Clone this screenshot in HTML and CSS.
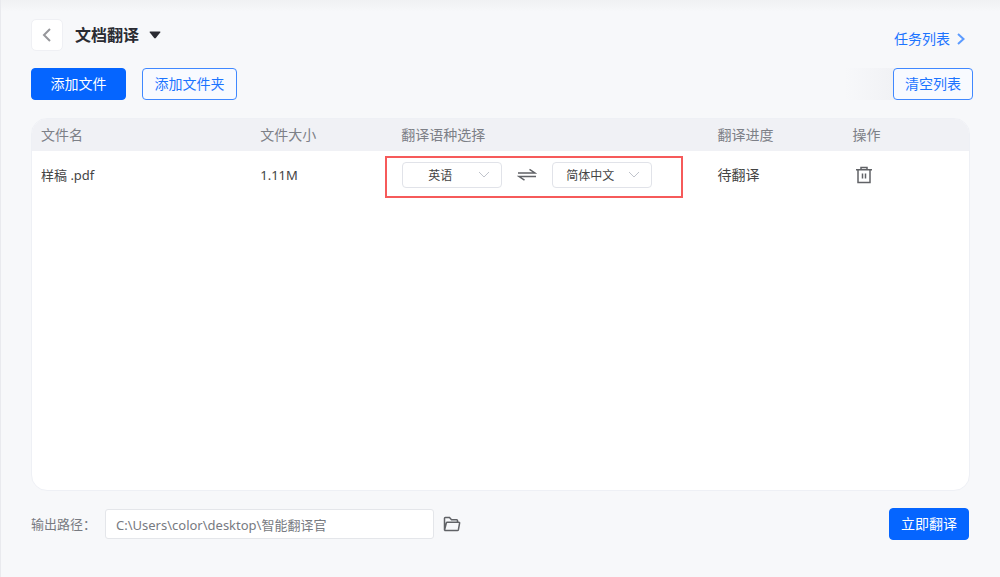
FILE: index.html
```html
<!DOCTYPE html>
<html lang="zh-CN">
<head>
<meta charset="utf-8">
<meta name="viewport" content="width=device-width, initial-scale=1">
<title>文档翻译</title>
<link rel="stylesheet" href="styles.css">
</head>
<body>
<main class="app">
  <header class="topbar">
    <button class="back" type="button" aria-label="返回">
      <svg width="10" height="16" viewBox="0 0 10 16"><path d="M8 2 2 8l6 6"/></svg>
    </button>
    <h1 class="title"><button class="title-menu" type="button">文档翻译
      <svg width="12" height="8" viewBox="0 0 12 8"><path d="M1.3.5h9.4q1.2 0 .5 1L6.8 7q-.8.9-1.6 0L.8 1.500Q.1.500 1.300.5z"/></svg>
    </button></h1>
    <a class="tasks" href="#tasks">任务列表
      <svg width="8" height="12" viewBox="0 0 8 12"><path d="m1 1 5.500 5L1 11"/></svg>
    </a>
  </header>

  <div class="toolbar">
    <button class="btn primary add" type="button">添加文件</button>
    <button class="btn outline add" type="button">添加文件夹</button>
    <div class="clear-group">
      <button class="btn outline" type="button">清空列表</button>
    </div>
  </div>

  <section class="panel">
    <table class="files">
      <colgroup><col class="c-name"><col class="c-size"><col class="c-lang"><col class="c-state"><col class="c-action"></colgroup>
      <thead>
        <tr><th>文件名</th><th>文件大小</th><th class="lang-head">翻译语种选择</th><th>翻译进度</th><th>操作</th></tr>
      </thead>
      <tbody>
        <tr>
          <td class="small">样稿 .pdf</td>
          <td class="small">1.11M</td>
          <td class="lang-cell">
            <div class="langs">
              <span class="picker">
                <select aria-label="源语言"><option>英语</option><option>简体中文</option></select>
                <svg width="12" height="8" viewBox="0 0 12 8"><path d="m1 1 5 5 5-5"/></svg>
              </span>
              <button class="icon swap" type="button" aria-label="交换语言">
                <svg width="20" height="14" viewBox="0 0 20 14"><path d="M1 5h17L12.500 1.300M19 8.500H2l5.500 3.700"/></svg>
              </button>
              <span class="picker">
                <select aria-label="目标语言"><option>简体中文</option><option>英语</option></select>
                <svg width="12" height="8" viewBox="0 0 12 8"><path d="m1 1 5 5 5-5"/></svg>
              </span>
            </div>
          </td>
          <td>待翻译</td>
          <td class="action-cell">
            <button class="icon trash" type="button" aria-label="删除">
              <svg width="18" height="18" viewBox="0 0 18 18"><path d="M1 3.800h16M6 3.500V1.500h6v2M3 4v12.500h12V4M7.500 7.500v5M10.500 7.500v5"/></svg>
            </button>
          </td>
        </tr>
      </tbody>
    </table>
  </section>

  <footer class="bottom">
    <label for="path">输出路径：</label>
    <input id="path" type="text" value="C:\Users\color\desktop\智能翻译官">
    <button class="icon folder" type="button" aria-label="选择文件夹">
      <svg width="18" height="16" viewBox="0 0 18 16"><path d="M1.500 14V2.300q0-.8.800-.8h4.200l2 2.200h5.200q.8 0 .8.800v1.800M1.500 14.200 3.300 7q.2-.7 1-.7h11.500q1 0 .8.900l-1.200 6.500q-.2.800-1 .8H2q-.5 0-.5-.5z"/></svg>
    </button>
    <button class="btn primary start" type="button">立即翻译</button>
  </footer>
</main>
</body>
</html>
```
FILE: styles.css
```css
* {
  box-sizing: border-box;
}

body {
  margin: 0;
  background: #f7f8fa;
  color: #444;
  font: 14px/20px "Noto Sans", "Noto Sans CJK SC", sans-serif;
}

button,
input,
select {
  font: inherit;
  color: inherit;
}

button {
  padding: 0;
  border: 0;
  background: none;
  cursor: pointer;
}

svg {
  display: block;
  fill: none;
  stroke: currentColor;
}

.app {
  display: flex;
  flex-direction: column;
  min-height: 100vh;
  padding: 19px 30px 37px;
  border-left: 1px solid #e9eaee;
  background: linear-gradient(#f0f1f3, #f7f8fa 12px);
}

.topbar {
  display: flex;
  align-items: center;
  height: 32px;
}

.back {
  display: grid;
  place-items: center;
  width: 32px;
  height: 32px;
  border: 1px solid #eff0f4;
  border-radius: 5px;
  background: #fff;
  color: #96979b;
}

.back svg {
  stroke-width: 2;
}

.title {
  margin: 0 0 0 12px;
  font-size: 16px;
  line-height: 24px;
}

.title-menu {
  display: flex;
  align-items: center;
  gap: 10px;
  color: #2a2b32;
  font-weight: 700;
}

.title-menu svg {
  fill: currentColor;
  stroke: none;
}

.tasks {
  display: flex;
  align-items: center;
  gap: 7px;
  margin: 8px 5px 0 auto;
  color: #1c74ff;
  text-decoration: none;
}

.tasks svg {
  stroke: #5c9bff;
  stroke-width: 2;
}

.toolbar {
  display: flex;
  gap: 16px;
  margin: 17px -3px 18px 0;
}

.btn {
  height: 32px;
  padding: 0 11px;
  border: 1px solid #0565ff;
  border-radius: 4px;
}

.primary {
  background: #0565ff;
  color: #fff;
}

.outline {
  border-color: #4088ff;
  background: #f8faff;
  color: #1c74ff;
}

.add {
  width: 95px;
  padding: 0;
}

.clear-group {
  margin-left: auto;
  padding-left: 48px;
  background: linear-gradient(90deg, #f7f8fa, #f1f2f5 48px, #f7f8fa 52px);
}

.panel {
  flex: 1;
  overflow: hidden;
  border: 1px solid #eef0f5;
  border-radius: 16px;
  background: #fff;
}

.files {
  width: 100%;
  border-collapse: collapse;
  table-layout: fixed;
}

.c-name { width: 23.4%; }
.c-size { width: 14.3%; }
.c-lang { width: 34.5%; }
.c-state { width: 14.4%; }
.c-action { width: 13.4%; }

.files th {
  height: 32px;
  padding: 0 9px;
  background: #f0f1f5;
  color: #7d8087;
  font-weight: 400;
  text-align: left;
}

.files td {
  height: 48px;
  padding: 0 9px;
}

.files .lang-head {
  padding-left: 16px;
}

.files .lang-cell {
  padding: 5px 26px 1px 0;
}

.files .action-cell {
  padding-left: 12px;
}

.files .small {
  font-size: 13px;
}

.langs {
  display: flex;
  align-items: center;
  height: 42px;
  padding: 0 0 4px 15px;
  border: 2px solid #f65a5a;
}

.picker {
  display: grid;
  align-items: center;
  width: 100px;
}

.picker select,
.picker svg {
  grid-area: 1 / 1;
}

.picker select {
  height: 26px;
  padding: 2px 24px 0 0;
  border: 1px solid #e1e3e9;
  border-radius: 4px;
  background: #fff;
  appearance: none;
  font-size: 12px;
  text-align-last: center;
}

.picker svg {
  justify-self: end;
  margin-right: 12px;
  color: #c0c4cc;
  pointer-events: none;
}

.icon {
  color: #606266;
}

.swap {
  margin: 0 15px;
}

.trash {
  display: block;
}

.swap svg,
.trash svg,
.folder svg {
  stroke-width: 1.5;
}

.bottom {
  display: flex;
  align-items: center;
  margin-top: 17px;
  color: #777a81;
}

.bottom label {
  width: 74px;
  font-size: 13px;
}

.bottom input {
  width: 329px;
  height: 30px;
  padding: 0 10px;
  border: 1px solid #e4e6ea;
  border-radius: 3px;
  background: #fff;
  font-size: 13px;
}

.folder {
  margin-left: 9px;
}

.start {
  margin: 0 1px 0 auto;
}
```
